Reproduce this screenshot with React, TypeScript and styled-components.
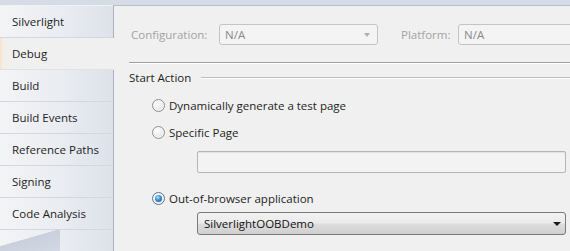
import styled, { createGlobalStyle, css } from "styled-components";

/*--------------------------
    Global
--------------------------*/
const Global = createGlobalStyle`
    html, body {
        margin: 0;
        padding: 0;
        background: #f0f0f0;
    }
    body {
        font-family: "Open Sans", "Noto Sans", sans-serif;
        font-size: 11.5px;
        color: #1e1e1e;
    }
`;

/*--------------------------
    Styled
--------------------------*/
const Window = styled.div`
    display: flex;
    flex-direction: column;
    width: 570px;
    height: 251px;
    overflow: hidden;
    background: #d6dce6;
`;
const TopStrip = styled.div`
    height: 5px;
    flex: none;
`;
const Body = styled.div`
    display: flex;
    flex: 1;
    min-height: 0;
`;
const TabList = styled.div`
    display: flex;
    flex-direction: column;
    width: 113px;
    flex: none;
    background: linear-gradient(to right, #f3f4f6 0%, #e9ecf1 55%, #dde2ea 100%);
    border-top: 1px solid #eef1f5;
`;
const Tab = styled.div<{ $active?: boolean }>`
    position: relative;
    display: flex;
    height: 31px;
    padding: 0 0 0 12px;
    align-items: center;
    border-bottom: 1px solid #d3d8e0;
    white-space: nowrap;

    ${(p) =>
        p.$active &&
        css`
            z-index: 1;
            margin-right: -1px;
            background: linear-gradient(to right, #f6e4c8 0px, #f3efe8 3px, #f0f0f0 12px);
            border-bottom-color: #e2e2e2;
        `}
`;
const TabFill = styled.div`
    flex: 1;
    background: linear-gradient(164deg, transparent 0 42%, #c9d0dc 43%, #d3d9e3 100%);
    background-size: 60px 100%;
    background-repeat: no-repeat;
`;
const Panel = styled.div`
    display: flex;
    flex: 1;
    flex-direction: column;
    min-width: 0;
    padding: 17px 0 0 17px;
    background: #f0f0f0;
    border-top: 1px solid #b7bfcc;
    border-left: 1px solid #a9b2c1;
`;
const ConfigRow = styled.div`
    display: flex;
    align-items: center;
    height: 23px;
`;
const ConfigLabel = styled.span<{ $width: number; $indent?: number }>`
    width: ${(p) => p.$width}px;
    margin: 0 0 0 ${(p) => p.$indent ?? 0}px;
    flex: none;
    color: #a3a3a3;
`;
const DisabledCombo = styled.div<{ $width: number }>`
    display: flex;
    width: ${(p) => p.$width}px;
    height: 21px;
    flex: none;
    padding: 0 0 0 5px;
    box-sizing: border-box;
    align-items: center;
    justify-content: space-between;
    border: 1px solid #c4c4c4;
    border-radius: 3px;
    background: #f4f4f4;
    color: #8a8a8a;
`;
const DisabledArrow = styled.span`
    width: 0;
    height: 0;
    margin: 0 7px 0 0;
    border-left: 3.5px solid transparent;
    border-right: 3.5px solid transparent;
    border-top: 4px solid #b0b0b0;
`;
const Rule = styled.div`
    height: 0;
    margin: 16px 0 0 -2px;
    border-top: 1px solid #a0a0a0;
    border-bottom: 1px solid #ffffff;
`;
const GroupHeader = styled.div`
    display: flex;
    margin: 6px 0 0 -2px;
    align-items: center;
    gap: 10px;
`;
const GroupLine = styled.div`
    flex: 1;
    height: 0;
    border-top: 1px solid #bcbcbc;
    border-bottom: 1px solid #ffffff;
`;
const Options = styled.div`
    display: flex;
    flex-direction: column;
    padding: 12px 4px 0 21px;
`;
const RadioRow = styled.label<{ $gap: number }>`
    display: flex;
    margin: ${(p) => p.$gap}px 0 0 0;
    align-items: center;
    gap: 4px;
    height: 16px;
`;
const Radio = styled.span<{ $checked?: boolean }>`
    position: relative;
    width: 11px;
    height: 11px;
    flex: none;
    border: 1px solid #8f8f8f;
    border-radius: 50%;
    background: radial-gradient(circle at 40% 35%, #ffffff 0%, #eaeaea 55%, #d4d4d4 100%);
    box-shadow: inset 0 0 0 1px #f7f7f7;

    ${(p) =>
        p.$checked &&
        css`
            border-color: #5a7893;
            &::after {
                content: "";
                position: absolute;
                left: 2px;
                top: 2px;
                width: 7px;
                height: 7px;
                border-radius: 50%;
                background: radial-gradient(circle at 40% 35%, #b9e2f9 0%, #3c8ccf 45%, #1c5486 100%);
            }
        `}
`;
const TextBox = styled.div`
    height: 22px;
    margin: 11px 0 0 45px;
    box-sizing: border-box;
    border: 1px solid #b5b5b5;
    border-radius: 2px;
    background: #f3f3f3;
    box-shadow: inset 0 1px 0 #e2e2e2;
`;
const Combo = styled.div`
    display: flex;
    height: 23px;
    margin: 6px 0 0 45px;
    padding: 0 0 0 6px;
    box-sizing: border-box;
    align-items: center;
    justify-content: space-between;
    border: 1px solid #7a7a7a;
    border-radius: 3px;
    background: linear-gradient(to bottom, #f2f2f2 0%, #ebebeb 48%, #dddddd 52%, #d0d0d0 100%);
    color: #111;
`;
const ComboArrow = styled.span`
    width: 0;
    height: 0;
    margin: 1px 4px 0 0;
    border-left: 4px solid transparent;
    border-right: 4px solid transparent;
    border-top: 4px solid #1a1a1a;
`;

/*--------------------------
    Main
--------------------------*/
const tabs = [
    "Silverlight",
    "Debug",
    "Build",
    "Build Events",
    "Reference Paths",
    "Signing",
    "Code Analysis",
];

const App = () => {
    return (
        <Window>
            <Global />
            <TopStrip />
            <Body>
                <TabList>
                    {tabs.map((name) => (
                        <Tab key={name} $active={name === "Debug"}>
                            {name}
                        </Tab>
                    ))}
                    <TabFill />
                </TabList>
                <Panel>
                    <ConfigRow>
                        <ConfigLabel $width={88}>Configuration:</ConfigLabel>
                        <DisabledCombo $width={159}>
                            N/A
                            <DisabledArrow />
                        </DisabledCombo>
                        <ConfigLabel $width={57} $indent={23}>
                            Platform:
                        </ConfigLabel>
                        <DisabledCombo $width={130}>N/A</DisabledCombo>
                    </ConfigRow>
                    <Rule />
                    <GroupHeader>
                        <span>Start Action</span>
                        <GroupLine />
                    </GroupHeader>
                    <Options>
                        <RadioRow $gap={0}>
                            <Radio />
                            Dynamically generate a test page
                        </RadioRow>
                        <RadioRow $gap={11}>
                            <Radio />
                            Specific Page
                        </RadioRow>
                        <TextBox />
                        <RadioRow $gap={17}>
                            <Radio $checked />
                            Out-of-browser application
                        </RadioRow>
                        <Combo>
                            SilverlightOOBDemo
                            <ComboArrow />
                        </Combo>
                    </Options>
                </Panel>
            </Body>
        </Window>
    );
};

export default App;
